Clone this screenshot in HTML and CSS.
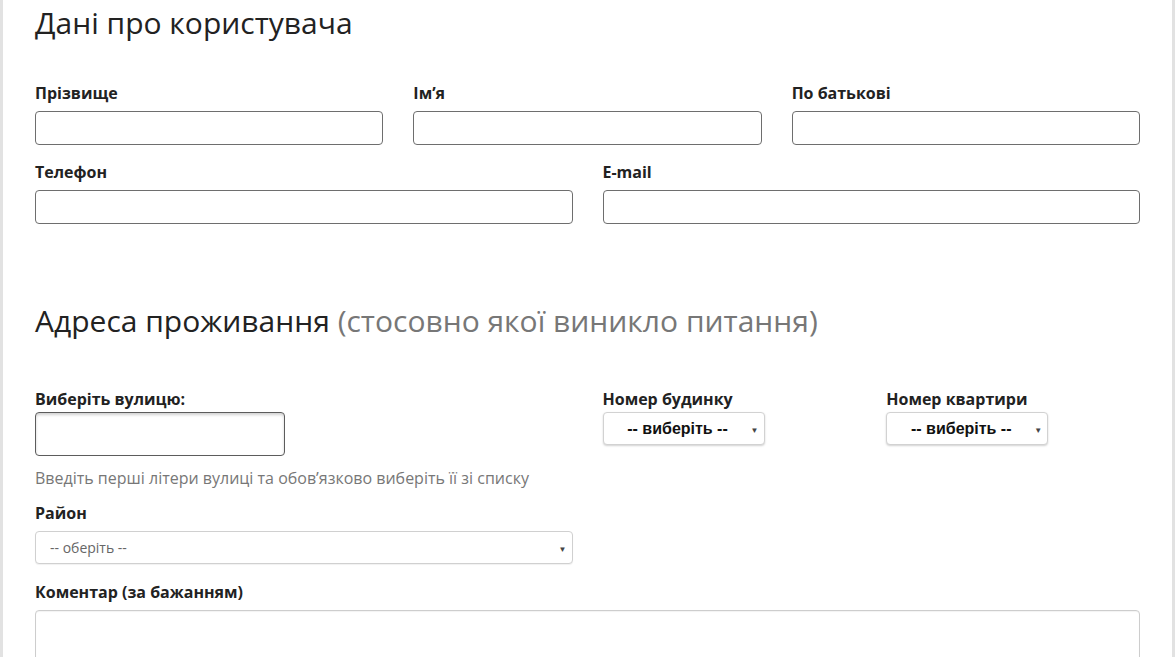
FILE: index.html
```html
<!DOCTYPE html>
<html lang="uk">
<head>
  <meta charset="UTF-8">
  <title>Дані про користувача</title>
  <meta name="viewport" content="width=device-width, initial-scale=1.0">
  <link rel="stylesheet" href="styles.css">
</head>
<body>
  <div class="page">
    <form class="request-form">

      <!-- Дані про користувача -->
      <h2 class="form-title">Дані про користувача</h2>

      <div class="row row-3">
        <div class="field">
          <label>Прізвище</label>
          <input type="text" class="form-input" name="lastname">
        </div>
        <div class="field">
          <label>Ім’я</label>
          <input type="text" class="form-input" name="firstname">
        </div>
        <div class="field">
          <label>По батькові</label>
          <input type="text" class="form-input" name="middlename">
        </div>
      </div>

      <div class="row row-2">
        <div class="field">
          <label>Телефон</label>
          <input type="tel" class="form-input" name="phone">
        </div>
        <div class="field">
          <label>E-mail</label>
          <input type="email" class="form-input" name="email">
        </div>
      </div>

      <!-- Адреса -->
      <h2 class="form-title address-title">Адреса проживання <span class="muted">(стосовно якої виникло питання)</span></h2>

      <div class="row row-2 address-row">
        <div class="col">
          <label class="street-label">Виберіть вулицю:</label>
          <input type="text" class="street-input" name="street">
          <p class="help">Введіть перші літери вулиці та обов’язково виберіть її зі списку</p>

          <label>Район</label>
          <div class="select-wrap">
            <select class="form-select" name="district">
              <option>-- оберіть --</option>
            </select>
            <span class="arrow">▼</span>
          </div>
        </div>

        <div class="row row-2 sub-row">
          <div class="col">
            <label class="street-label">Номер будинку</label>
            <div class="select-wrap small">
              <select class="small-select" name="house">
                <option>-- виберіть --</option>
              </select>
              <span class="arrow">▼</span>
            </div>
          </div>
          <div class="col">
            <label class="street-label">Номер квартири</label>
            <div class="select-wrap small">
              <select class="small-select" name="flat">
                <option>-- виберіть --</option>
              </select>
              <span class="arrow">▼</span>
            </div>
          </div>
        </div>
      </div>

      <div class="field comment">
        <label>Коментар (за бажанням)</label>
        <textarea class="form-textarea" name="comment"></textarea>
      </div>

    </form>
  </div>
</body>
</html>
```

FILE: styles.css
```css
html, body {
  margin: 0;
  padding: 0;
  background: #fff;
}

body {
  font-family: "Open Sans", "Noto Sans", Arial, sans-serif;
  color: #222;
  overflow: hidden;
}

* { box-sizing: border-box; }

.page {
  border-left: 3px solid #e2e2e2;
  border-right: 3px solid #e2e2e2;
  padding: 6px 32px 0;
  min-height: 100vh;
}

.form-title {
  font-size: 30px;
  line-height: 34px;
  font-weight: 400;
  color: #222;
  margin: 0 0 42px;
}

.address-title { margin: 64px 0 50px; }
.muted { color: #777; }

.row {
  display: grid;
  column-gap: 30px;
}
.row-3 { grid-template-columns: repeat(3, 1fr); }
.row-2 { grid-template-columns: 1fr 1fr; }

.field { margin-bottom: 16px; }
.sub-row { align-items: start; }

label {
  display: block;
  font-size: 16px;
  line-height: 22px;
  font-weight: 700;
  color: #222;
  margin-bottom: 7px;
}
.street-label { margin-bottom: 2px; }

.form-input {
  display: block;
  width: 100%;
  height: 34px;
  border: 1px solid #6e6e6e;
  border-radius: 4px;
  background: #fff;
  font: inherit;
  padding: 6px 12px;
}

.street-input {
  display: block;
  width: 250px;
  height: 44px;
  border: 1px solid #5c5c5c;
  border-radius: 4px;
  background: #fff;
  box-shadow: inset 0 2px 3px rgba(0, 0, 0, 0.18);
  font: inherit;
}

.help {
  font-size: 16px;
  line-height: 22px;
  color: #777;
  margin: 11px 0 13px;
}

.select-wrap { position: relative; }
.select-wrap .arrow {
  position: absolute;
  right: 6px;
  top: 50%;
  transform: translateY(-50%);
  font-size: 8px;
  color: #444;
  pointer-events: none;
}

.form-select {
  -webkit-appearance: none;
  appearance: none;
  display: block;
  width: 100%;
  height: 33px;
  border: 1px solid #d0d0d0;
  border-radius: 4px;
  background: #fff;
  box-shadow: 0 1px 1px rgba(0, 0, 0, 0.06);
  padding: 0 14px;
  font-family: "Open Sans", Arial, sans-serif;
  font-size: 14px;
  color: #666;
}

.select-wrap.small { width: 162px; }
.small-select {
  -webkit-appearance: none;
  appearance: none;
  display: block;
  width: 162px;
  height: 33px;
  border: 1px solid #d2d2d2;
  border-radius: 4px;
  background: #fff;
  box-shadow: 0 1px 2px rgba(0, 0, 0, 0.18);
  font-family: "Liberation Sans", Arial, sans-serif;
  font-size: 16px;
  font-weight: 700;
  color: #111;
  text-align: center;
  text-align-last: center;
  padding: 0 22px 0 10px;
}

.comment { margin-top: 17px; }

.form-textarea {
  display: block;
  width: 100%;
  height: 120px;
  border: 1px solid #cdcdcd;
  border-radius: 4px;
  box-shadow: inset 0 1px 1px rgba(0, 0, 0, 0.05);
  resize: vertical;
}
```
